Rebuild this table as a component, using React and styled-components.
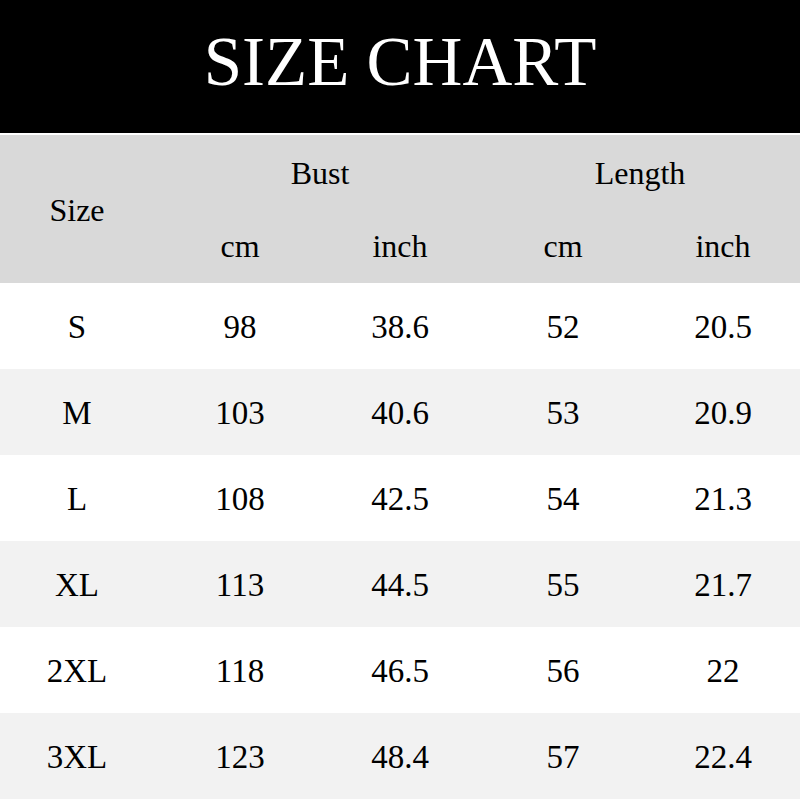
import styled, { createGlobalStyle } from 'styled-components'

const rows = [
    ['S', '98', '38.6', '52', '20.5'],
    ['M', '103', '40.6', '53', '20.9'],
    ['L', '108', '42.5', '54', '21.3'],
    ['XL', '113', '44.5', '55', '21.7'],
    ['2XL', '118', '46.5', '56', '22'],
    ['3XL', '123', '48.4', '57', '22.4'],
]

const GlobalStyle = createGlobalStyle`
body {
    margin: 0;
    background: #fff;
    font-family: "Liberation Serif", "Times New Roman", serif;
    color: #000;
}
`

const App = () => {
    return (
        <>
            <GlobalStyle />
            <Page>
                <Banner>
                    <h1>SIZE CHART</h1>
                </Banner>
                <HeadGrid>
                    <SizeHead>Size</SizeHead>
                    <Group $col="2 / 4">Bust</Group>
                    <Group $col="4 / 6">Length</Group>
                    <Unit $col={2}>cm</Unit>
                    <Unit $col={3}>inch</Unit>
                    <Unit $col={4}>cm</Unit>
                    <Unit $col={5}>inch</Unit>
                </HeadGrid>
                {rows.map((r, i) => (
                    <Row key={r[0]} $shade={i % 2 === 1}>
                        {r.map((v, j) => (
                            <Cell key={j} $first={j === 0}>{v}</Cell>
                        ))}
                    </Row>
                ))}
            </Page>
        </>
    )
}

export default App

const Page = styled.div`
width: 800px;
height: 800px;
overflow: hidden;
`

const Banner = styled.div`
background: #000;
height: 133px;
display: flex;
align-items: center;
justify-content: center;
border-bottom: 2px solid #fff;

h1{
    margin: 0;
    color: #fff;
    font-weight: 400;
    font-size: 69px;
    line-height: 1;
    padding-bottom: 8px;
}`

const HeadGrid = styled.div`
background: #d9d9d9;
height: 148px;
display: grid;
grid-template-columns: repeat(5, 160px);
grid-template-rows: 74px 74px;
font-size: 32px;
`

const SizeHead = styled.div`
grid-column: 1;
grid-row: 1 / 3;
display: flex;
align-items: center;
justify-content: center;
padding-right: 6px;
padding-top: 2px;
`

const Group = styled.div`
grid-column: ${p => p.$col};
grid-row: 1;
display: flex;
align-items: center;
justify-content: center;
padding-top: 2px;
`

const Unit = styled.div`
grid-column: ${p => p.$col};
grid-row: 2;
display: flex;
align-items: center;
justify-content: center;
padding-left: ${p => p.$col > 3 ? '6px' : '0'};
`

const Row = styled.div`
height: 86px;
display: grid;
grid-template-columns: repeat(5, 160px);
background: ${p => p.$shade ? '#f2f2f2' : '#fff'};
font-size: 33px;
`

const Cell = styled.div`
display: flex;
align-items: center;
justify-content: center;
padding-top: 3px;
padding-right: ${p => p.$first ? '6px' : '0'};
&:nth-child(4), &:nth-child(5){
    padding-left: 6px;
}
`
